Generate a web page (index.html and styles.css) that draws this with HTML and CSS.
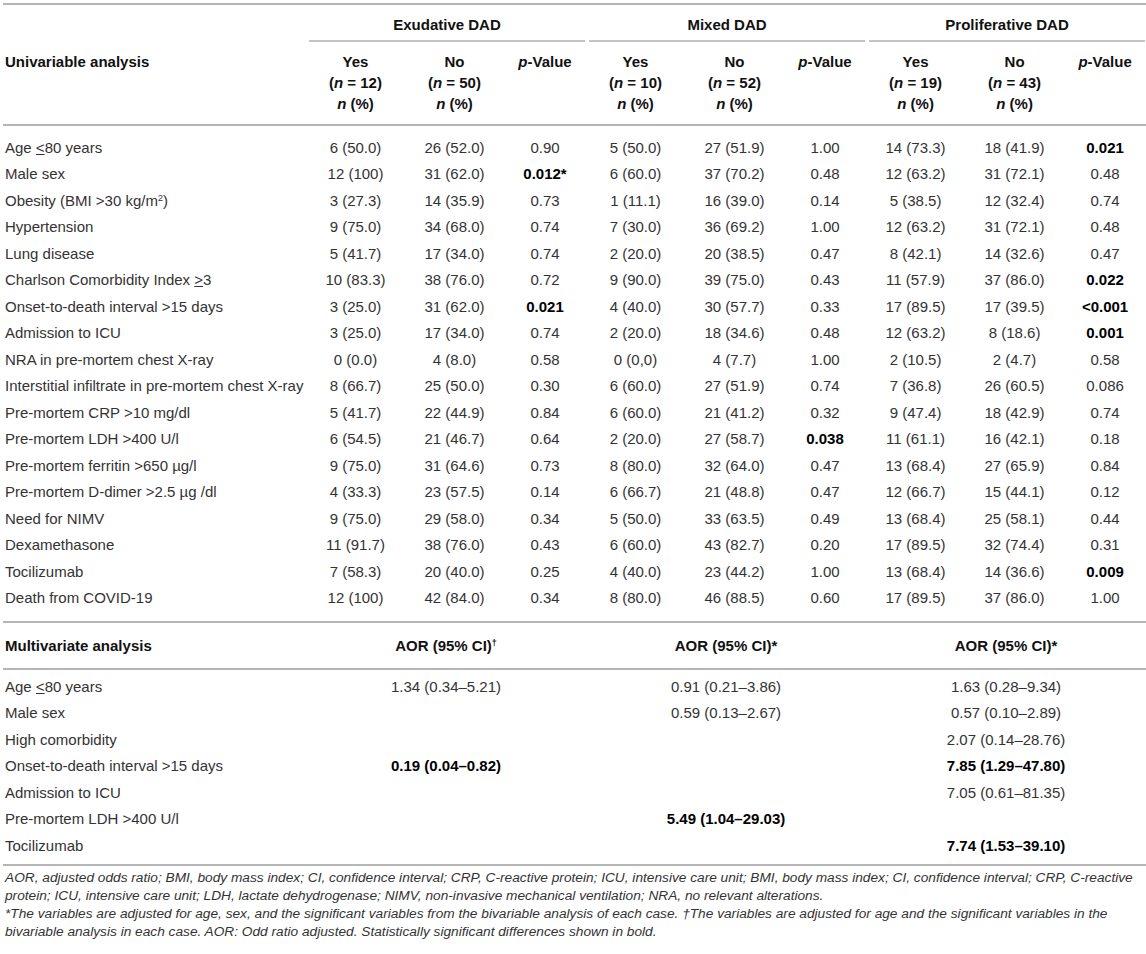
FILE: index.html
```html
<!DOCTYPE html>
<html lang="en">
<head>
<meta charset="utf-8">
<title>DAD univariable and multivariate analysis</title>
<link rel="stylesheet" href="styles.css">
</head>
<body>
<table class="stats">
  <colgroup>
    <col class="c-label">
    <col class="c-yes"><col class="c-no"><col class="c-p">
    <col class="c-yes"><col class="c-no"><col class="c-p">
    <col class="c-yes"><col class="c-no"><col class="c-p">
  </colgroup>
  <thead>
    <tr class="group-row">
      <th></th>
      <th colspan="3"><div class="group">Exudative DAD</div></th>
      <th colspan="3"><div class="group">Mixed DAD</div></th>
      <th colspan="3"><div class="group">Proliferative DAD</div></th>
    </tr>
    <tr class="sub-row">
      <th class="label">Univariable analysis</th>
      <th>Yes<br>(<i>n</i> = 12)<br><i>n</i> (%)</th>
      <th>No<br>(<i>n</i> = 50)<br><i>n</i> (%)</th>
      <th><i>p</i>-Value</th>
      <th>Yes<br>(<i>n</i> = 10)<br><i>n</i> (%)</th>
      <th>No<br>(<i>n</i> = 52)<br><i>n</i> (%)</th>
      <th><i>p</i>-Value</th>
      <th>Yes<br>(<i>n</i> = 19)<br><i>n</i> (%)</th>
      <th>No<br>(<i>n</i> = 43)<br><i>n</i> (%)</th>
      <th><i>p</i>-Value</th>
    </tr>
  </thead>
  <tbody class="uni">
    <tr><td class="label">Age <u>&lt;</u>80 years</td><td>6 (50.0)</td><td>26 (52.0)</td><td>0.90</td><td>5 (50.0)</td><td>27 (51.9)</td><td>1.00</td><td>14 (73.3)</td><td>18 (41.9)</td><td><b>0.021</b></td></tr>
    <tr><td class="label">Male sex</td><td>12 (100)</td><td>31 (62.0)</td><td><b>0.012*</b></td><td>6 (60.0)</td><td>37 (70.2)</td><td>0.48</td><td>12 (63.2)</td><td>31 (72.1)</td><td>0.48</td></tr>
    <tr><td class="label">Obesity (BMI &gt;30 kg/m<sup>2</sup>)</td><td>3 (27.3)</td><td>14 (35.9)</td><td>0.73</td><td>1 (11.1)</td><td>16 (39.0)</td><td>0.14</td><td>5 (38.5)</td><td>12 (32.4)</td><td>0.74</td></tr>
    <tr><td class="label">Hypertension</td><td>9 (75.0)</td><td>34 (68.0)</td><td>0.74</td><td>7 (30.0)</td><td>36 (69.2)</td><td>1.00</td><td>12 (63.2)</td><td>31 (72.1)</td><td>0.48</td></tr>
    <tr><td class="label">Lung disease</td><td>5 (41.7)</td><td>17 (34.0)</td><td>0.74</td><td>2 (20.0)</td><td>20 (38.5)</td><td>0.47</td><td>8 (42.1)</td><td>14 (32.6)</td><td>0.47</td></tr>
    <tr><td class="label">Charlson Comorbidity Index <u>&gt;</u>3</td><td>10 (83.3)</td><td>38 (76.0)</td><td>0.72</td><td>9 (90.0)</td><td>39 (75.0)</td><td>0.43</td><td>11 (57.9)</td><td>37 (86.0)</td><td><b>0.022</b></td></tr>
    <tr><td class="label">Onset-to-death interval &gt;15 days</td><td>3 (25.0)</td><td>31 (62.0)</td><td><b>0.021</b></td><td>4 (40.0)</td><td>30 (57.7)</td><td>0.33</td><td>17 (89.5)</td><td>17 (39.5)</td><td><b>&lt;0.001</b></td></tr>
    <tr><td class="label">Admission to ICU</td><td>3 (25.0)</td><td>17 (34.0)</td><td>0.74</td><td>2 (20.0)</td><td>18 (34.6)</td><td>0.48</td><td>12 (63.2)</td><td>8 (18.6)</td><td><b>0.001</b></td></tr>
    <tr><td class="label">NRA in pre-mortem chest X-ray</td><td>0 (0.0)</td><td>4 (8.0)</td><td>0.58</td><td>0 (0,0)</td><td>4 (7.7)</td><td>1.00</td><td>2 (10.5)</td><td>2 (4.7)</td><td>0.58</td></tr>
    <tr><td class="label">Interstitial infiltrate in pre-mortem chest X-ray</td><td>8 (66.7)</td><td>25 (50.0)</td><td>0.30</td><td>6 (60.0)</td><td>27 (51.9)</td><td>0.74</td><td>7 (36.8)</td><td>26 (60.5)</td><td>0.086</td></tr>
    <tr><td class="label">Pre-mortem CRP &gt;10 mg/dl</td><td>5 (41.7)</td><td>22 (44.9)</td><td>0.84</td><td>6 (60.0)</td><td>21 (41.2)</td><td>0.32</td><td>9 (47.4)</td><td>18 (42.9)</td><td>0.74</td></tr>
    <tr><td class="label">Pre-mortem LDH &gt;400 U/l</td><td>6 (54.5)</td><td>21 (46.7)</td><td>0.64</td><td>2 (20.0)</td><td>27 (58.7)</td><td><b>0.038</b></td><td>11 (61.1)</td><td>16 (42.1)</td><td>0.18</td></tr>
    <tr><td class="label">Pre-mortem ferritin &gt;650 µg/l</td><td>9 (75.0)</td><td>31 (64.6)</td><td>0.73</td><td>8 (80.0)</td><td>32 (64.0)</td><td>0.47</td><td>13 (68.4)</td><td>27 (65.9)</td><td>0.84</td></tr>
    <tr><td class="label">Pre-mortem D-dimer &gt;2.5 µg /dl</td><td>4 (33.3)</td><td>23 (57.5)</td><td>0.14</td><td>6 (66.7)</td><td>21 (48.8)</td><td>0.47</td><td>12 (66.7)</td><td>15 (44.1)</td><td>0.12</td></tr>
    <tr><td class="label">Need for NIMV</td><td>9 (75.0)</td><td>29 (58.0)</td><td>0.34</td><td>5 (50.0)</td><td>33 (63.5)</td><td>0.49</td><td>13 (68.4)</td><td>25 (58.1)</td><td>0.44</td></tr>
    <tr><td class="label">Dexamethasone</td><td>11 (91.7)</td><td>38 (76.0)</td><td>0.43</td><td>6 (60.0)</td><td>43 (82.7)</td><td>0.20</td><td>17 (89.5)</td><td>32 (74.4)</td><td>0.31</td></tr>
    <tr><td class="label">Tocilizumab</td><td>7 (58.3)</td><td>20 (40.0)</td><td>0.25</td><td>4 (40.0)</td><td>23 (44.2)</td><td>1.00</td><td>13 (68.4)</td><td>14 (36.6)</td><td><b>0.009</b></td></tr>
    <tr><td class="label">Death from COVID-19</td><td>12 (100)</td><td>42 (84.0)</td><td>0.34</td><td>8 (80.0)</td><td>46 (88.5)</td><td>0.60</td><td>17 (89.5)</td><td>37 (86.0)</td><td>1.00</td></tr>
  </tbody>
  <tbody class="multi-head">
    <tr>
      <th class="label">Multivariate analysis</th>
      <th colspan="3">AOR (95% CI)<sup>†</sup></th>
      <th colspan="3">AOR (95% CI)*</th>
      <th colspan="3">AOR (95% CI)*</th>
    </tr>
  </tbody>
  <tbody class="multi">
    <tr><td class="label">Age <u>&lt;</u>80 years</td><td colspan="3">1.34 (0.34–5.21)</td><td colspan="3">0.91 (0.21–3.86)</td><td colspan="3">1.63 (0.28–9.34)</td></tr>
    <tr><td class="label">Male sex</td><td colspan="3"></td><td colspan="3">0.59 (0.13–2.67)</td><td colspan="3">0.57 (0.10–2.89)</td></tr>
    <tr><td class="label">High comorbidity</td><td colspan="3"></td><td colspan="3"></td><td colspan="3">2.07 (0.14–28.76)</td></tr>
    <tr><td class="label">Onset-to-death interval &gt;15 days</td><td colspan="3"><b>0.19 (0.04–0.82)</b></td><td colspan="3"></td><td colspan="3"><b>7.85 (1.29–47.80)</b></td></tr>
    <tr><td class="label">Admission to ICU</td><td colspan="3"></td><td colspan="3"></td><td colspan="3">7.05 (0.61–81.35)</td></tr>
    <tr><td class="label">Pre-mortem LDH &gt;400 U/l</td><td colspan="3"></td><td colspan="3"><b>5.49 (1.04–29.03)</b></td><td colspan="3"></td></tr>
    <tr><td class="label">Tocilizumab</td><td colspan="3"></td><td colspan="3"></td><td colspan="3"><b>7.74 (1.53–39.10)</b></td></tr>
  </tbody>
</table>
<div class="notes">
  <p>AOR, adjusted odds ratio; BMI, body mass index; CI, confidence interval; CRP, C-reactive protein; ICU, intensive care unit; BMI, body mass index; CI, confidence interval; CRP, C-reactive protein; ICU, intensive care unit; LDH, lactate dehydrogenase; NIMV, non-invasive mechanical ventilation; NRA, no relevant alterations.</p>
  <p>*The variables are adjusted for age, sex, and the significant variables from the bivariable analysis of each case. †The variables are adjusted for age and the significant variables in the bivariable analysis in each case. AOR: Odd ratio adjusted. Statistically significant differences shown in bold.</p>
</div>
</body>
</html>
```

FILE: styles.css
```css
html, body {
  margin: 0;
  padding: 0;
  background: #ffffff;
}

body {
  font-family: "Liberation Sans", Arial, Helvetica, sans-serif;
  color: #333333;
}

.stats {
  margin: 3px 0 0 3px;
  width: 1143px;
  border-collapse: separate;
  border-spacing: 0;
  table-layout: fixed;
  font-size: 15px;
}

.c-label { width: 303px; }
.c-yes { width: 99px; }
.c-no { width: 99px; }
.c-p { width: 82px; }

.stats th {
  font-weight: bold;
  color: #111111;
}

.stats sup {
  font-size: 9px;
  line-height: 0;
  vertical-align: 5px;
}

.stats u {
  text-decoration-thickness: 1px;
  text-underline-offset: 1px;
}

/* group header row */
.group-row th {
  border-top: 2px solid #b5b5b5;
  padding: 10.5px 0 0;
  line-height: 17px;
  text-align: center;
  vertical-align: bottom;
}

.group {
  margin: 0 1px 0 3px;
  padding-bottom: 7.5px;
  border-bottom: 2px solid #c4c4c4;
}

/* sub header row */
.sub-row th {
  padding: 8.5px 2px 10.5px;
  line-height: 21px;
  text-align: center;
  vertical-align: top;
  border-bottom: 2px solid #b5b5b5;
}

.stats .label {
  text-align: left;
  padding-left: 2px;
}

/* univariable body */
.uni td {
  padding: 4.75px 2px;
  line-height: 17px;
  text-align: center;
  white-space: nowrap;
}

.uni tr:first-child td {
  padding-top: 12.5px;
}

.uni tr:last-child td {
  padding-bottom: 15px;
}

.stats b {
  color: #000000;
}

/* multivariate header */
.multi-head th {
  padding: 14px 2px;
  line-height: 17px;
  text-align: center;
  border-top: 2px solid #b5b5b5;
  border-bottom: 2px solid #b5b5b5;
}

/* multivariate body */
.multi td {
  padding: 4.75px 2px;
  line-height: 17px;
  text-align: center;
  white-space: nowrap;
}

.multi tr:first-child td {
  padding-top: 7.5px;
}

.multi tr:last-child td {
  padding-bottom: 10.5px;
  border-bottom: 2px solid #b5b5b5;
}

/* footnotes */
.notes {
  margin: 3px 0 0 5px;
  width: 1141px;
  font-size: 13.7px;
  line-height: 18px;
  font-style: italic;
  color: #333333;
}

.notes p {
  margin: 0;
}
```
